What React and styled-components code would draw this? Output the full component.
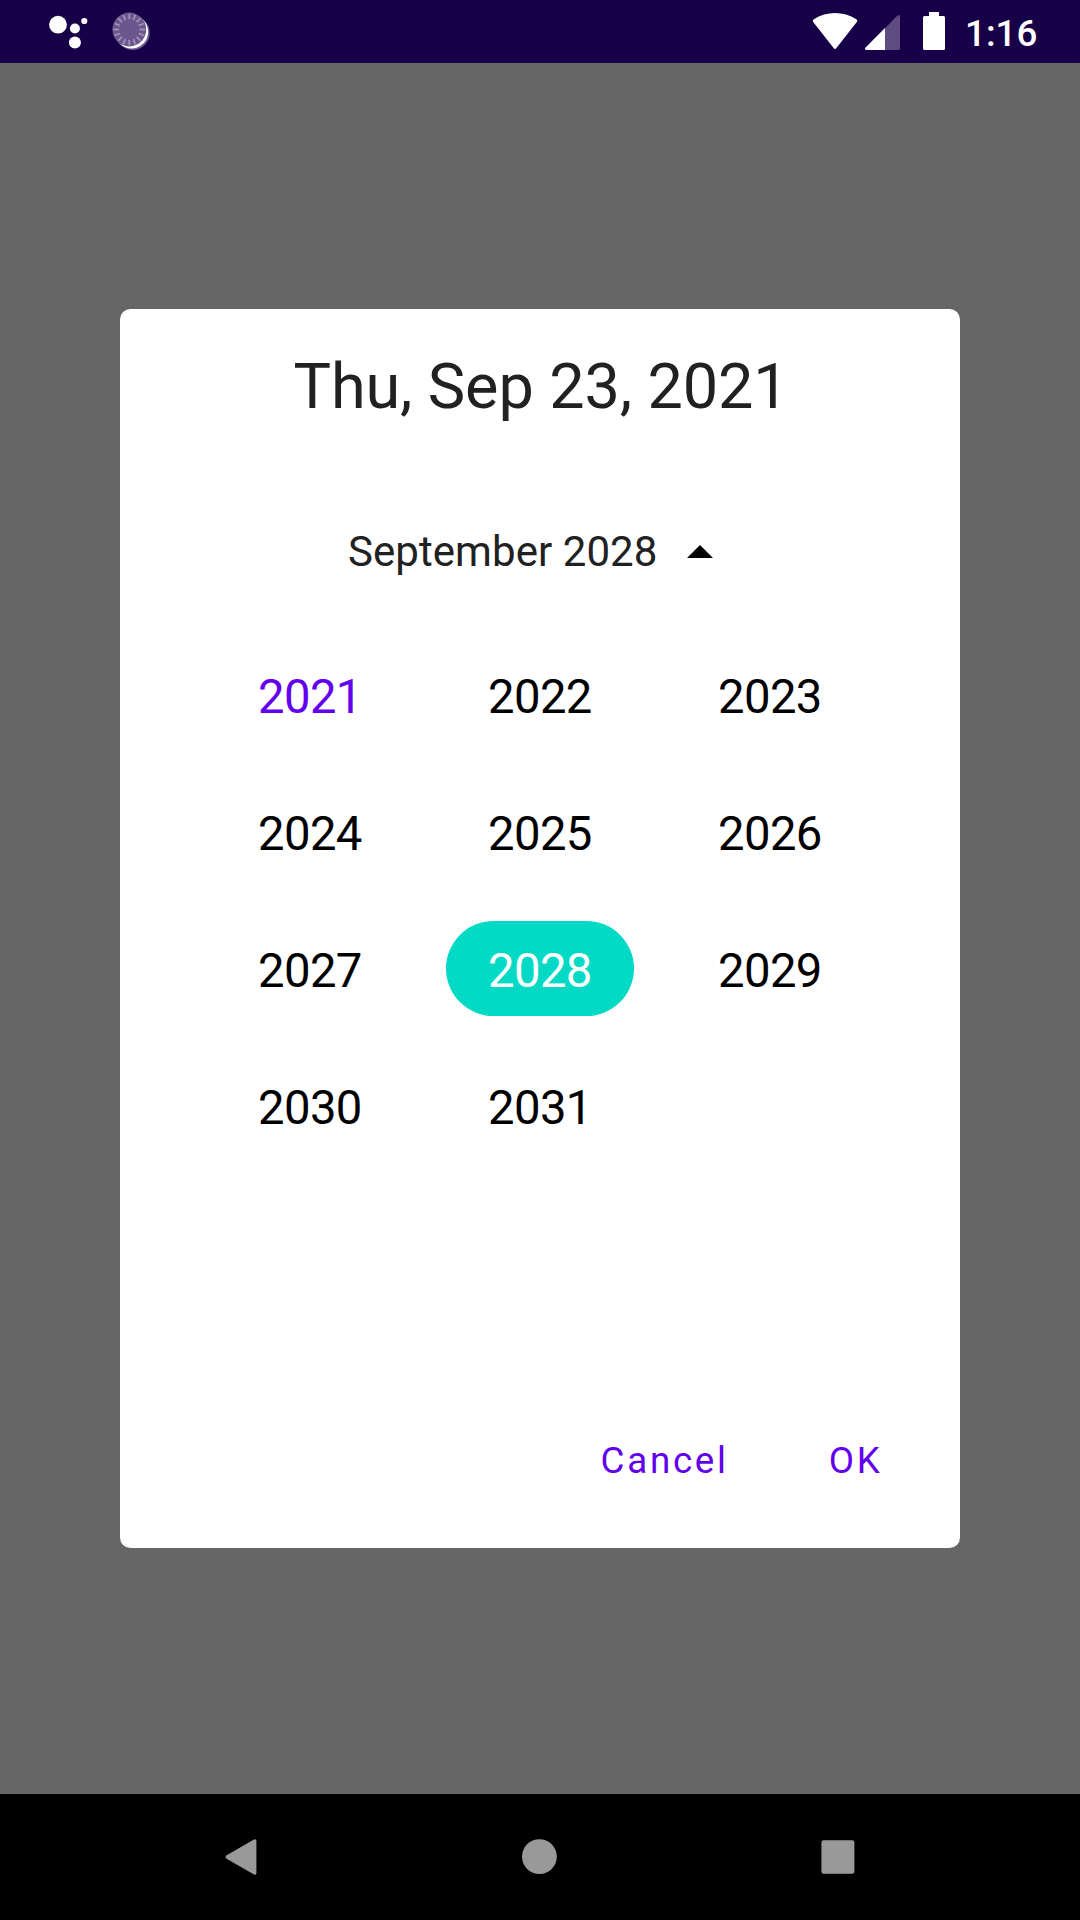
import React from "react";
import styled, { createGlobalStyle } from "styled-components";

const GlobalStyle = createGlobalStyle`
  html, body { margin: 0; padding: 0; }
  body { font-family: Roboto, "Noto Sans", sans-serif; background: #666666; }
  * { box-sizing: border-box; }
  button { font: inherit; border: 0; background: none; padding: 0; margin: 0; color: inherit; }
`;

const Screen = styled.div`
  width: 1080px;
  height: 1920px;
  display: flex;
  flex-direction: column;
  background: #666666;
  overflow: hidden;
`;

const StatusBar = styled.header`
  height: 63px;
  flex: none;
  display: flex;
  justify-content: space-between;
  background: #170048;
  color: #ffffff;
  padding-right: 42px;
`;

const StatusGroup = styled.div`
  display: flex;
`;

const Glyph = styled.svg`
  display: block;
  flex: none;
`;

const Clock = styled.span`
  font-size: 36.75px;
  font-weight: 500;
  line-height: 67px;
  width: 73px;
  white-space: nowrap;
`;

const Scrim = styled.main`
  flex: 1;
  display: flex;
  align-items: center;
  justify-content: center;
`;

const Dialog = styled.section`
  width: 840px;
  height: 1239px;
  border-radius: 10.5px;
  background: #ffffff;
  display: flex;
  flex-direction: column;
`;

const Title = styled.h1`
  margin: 0;
  padding-left: 2px;
  font-size: 63px;
  font-weight: 400;
  line-height: 155px;
  letter-spacing: -0.13px;
  text-align: center;
  color: #212121;
`;

const MonthToggle = styled.button`
  && {
    margin: 38px 0 24px;
    height: 100px;
    padding-left: 228px;
    display: flex;
    align-items: center;
    gap: 30px;
    font-size: 42px;
    line-height: 100px;
    letter-spacing: 0.06px;
    color: #212121;
  }
`;

const Caret = styled.svg`
  display: block;
  flex: none;
  margin-bottom: 1px;
`;

const YearGrid = styled.div`
  display: grid;
  grid-template-columns: repeat(3, 230px);
  grid-auto-rows: 137px;
  justify-content: center;
  place-items: center;
`;

const Year = styled.button`
  && {
    width: 188px;
    height: 95px;
    padding: 5px 0 0 42px;
    border-radius: 48px;
    font-size: 47.25px;
    line-height: 90px;
    letter-spacing: -0.6px;
    text-align: left;
    background: ${(p) => (p.$selected ? "#03dac6" : "transparent")};
    color: ${(p) => (p.$selected ? "#ffffff" : p.$current ? "#6200ee" : "#000000")};
  }
`;

const Actions = styled.footer`
  margin-top: auto;
  padding: 0 77.4px 52px 0;
  display: flex;
  justify-content: flex-end;
  gap: 100.2px;
`;

const Action = styled.button`
  && {
    font-size: 36.75px;
    line-height: 70px;
    letter-spacing: 2.7px;
    color: #6200ee;
  }
`;

const NavBar = styled.nav`
  height: 126px;
  flex: none;
  background: #000000;
`;

const YEARS = [2021, 2022, 2023, 2024, 2025, 2026, 2027, 2028, 2029, 2030, 2031];
const TICKS = Array.from({ length: 16 }, (_, i) => i * 22.5);

function Notifications() {
  return (
    <Glyph width="170" height="63" viewBox="0 0 170 63">
      <g fill="#fff">
        <circle cx="58" cy="24.7" r="8.9" />
        <circle cx="74.9" cy="28.5" r="5" />
        <circle cx="84.3" cy="21" r="3.1" />
        <circle cx="74.9" cy="42.6" r="6" />
      </g>
      <circle cx="132.8" cy="33" r="17" fill="#69568c" />
      <circle cx="131.5" cy="31.8" r="16.7" fill="#fff" />
      <circle cx="129.3" cy="29.5" r="16.9" fill="#6b578e" />
      <g stroke="#a196b8" strokeWidth="1.7">
        {TICKS.map((a) => (
          <path key={a} d="M129.3 13.6v5.6" transform={`rotate(${a} 129.3 29.5)`} />
        ))}
      </g>
    </Glyph>
  );
}

function SystemIcons() {
  return (
    <Glyph width="160" height="63" viewBox="805 0 160 63">
      <path
        fill="#fff"
        d="M813 21.8Q812.2 20.2 813.8 19.2Q823.5 13 835 13T856.4 19.2Q858 20.2 857 21.8L836.4 48Q835 49.8 833.6 48Z"
      />
      <path fill="#5d4c80" d="M885 50V28.3L897.5 15.5Q900 14 900 16.8V48.5Q900 50 898.5 50Z" />
      <path fill="#fff" d="M885 28V50H866.5Q864.2 49.5 865.3 47.7Z" />
      <path
        fill="#fff"
        d="M929 12H939V16H943.5Q945 16 945 17.5V48.5Q945 50 943.5 50H924.5Q923 50 923 48.5V17.5Q923 16 924.5 16H929Z"
      />
    </Glyph>
  );
}

export default function App() {
  return (
    <>
      <GlobalStyle />
      <Screen>
        <StatusBar>
          <Notifications />
          <StatusGroup>
            <SystemIcons />
            <Clock>1:16</Clock>
          </StatusGroup>
        </StatusBar>
        <Scrim>
          <Dialog>
            <Title>Thu, Sep 23, 2021</Title>
            <MonthToggle>
              September 2028
              <Caret width="26" height="13" viewBox="0 0 26 13">
                <path d="M0 13L13 0L26 13Z" fill="#000" />
              </Caret>
            </MonthToggle>
            <YearGrid>
              {YEARS.map((year) => (
                <Year key={year} $selected={year === 2028} $current={year === 2021}>
                  {year}
                </Year>
              ))}
            </YearGrid>
            <Actions>
              <Action>Cancel</Action>
              <Action>OK</Action>
            </Actions>
          </Dialog>
        </Scrim>
        <NavBar>
          <Glyph width="1080" height="126" viewBox="0 0 1080 126" fill="#999999">
            <path d="M226.2 64.4Q224.8 62.9 226.2 61.6L254 45.4Q256.4 44.6 256.4 47V79Q256.4 81.4 254 80.6Z" />
            <circle cx="539.4" cy="62.6" r="17.4" />
            <rect x="821.4" y="46.3" width="33" height="33.4" rx="2.2" />
          </Glyph>
        </NavBar>
      </Screen>
    </>
  );
}
